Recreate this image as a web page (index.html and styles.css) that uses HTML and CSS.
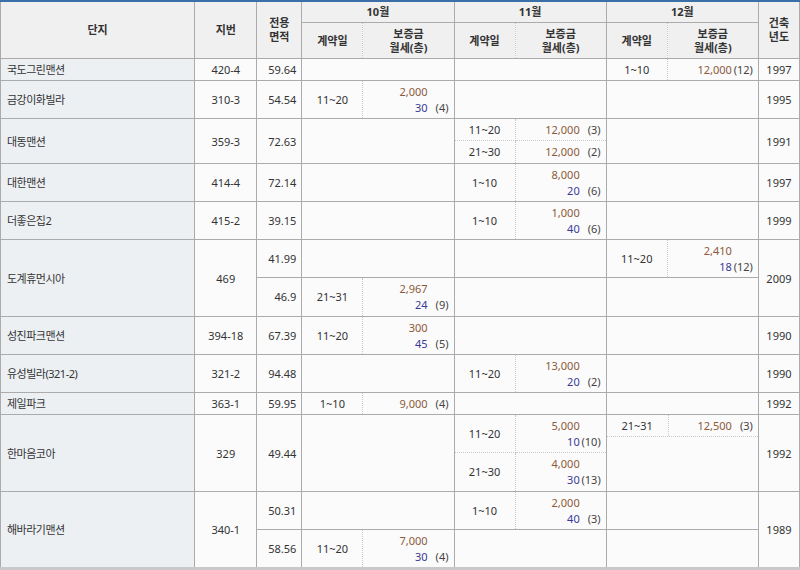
FILE: index.html
```html
<!DOCTYPE html>
<html lang="ko">
<head>
<meta charset="utf-8">
<title>실거래가</title>
<link rel="stylesheet" href="styles.css">
</head>
<body>
<table class="deals">
  <colgroup>
    <col class="c-name"><col class="c-jibun"><col class="c-area">
    <col class="c-date"><col class="c-amt">
    <col class="c-date"><col class="c-amt">
    <col class="c-date"><col class="c-amt">
    <col class="c-year">
  </colgroup>
  <thead>
    <tr>
      <th rowspan="2">단지</th>
      <th rowspan="2">지번</th>
      <th rowspan="2">전용<br>면적</th>
      <th colspan="2">10월</th>
      <th colspan="2">11월</th>
      <th colspan="2">12월</th>
      <th rowspan="2">건축<br>년도</th>
    </tr>
    <tr class="head2">
      <th class="hd">계약일</th><th class="ha">보증금<br>월세(층)</th>
      <th class="hd">계약일</th><th class="ha">보증금<br>월세(층)</th>
      <th class="hd">계약일</th><th class="ha">보증금<br>월세(층)</th>
    </tr>
  </thead>
  <tbody>
    <tr>
      <td class="name">국도그린맨션</td><td class="jibun">420-4</td><td class="area">59.64</td>
      <td colspan="2"></td>
      <td colspan="2"></td>
      <td class="date">1~10</td><td class="amt"><div><span class="dep">12,000</span><span class="fl">(12)</span></div></td>
      <td class="year">1997</td>
    </tr>
    <tr>
      <td class="name">금강이화빌라</td><td class="jibun">310-3</td><td class="area">54.54</td>
      <td class="date">11~20</td><td class="amt"><div><span class="dep">2,000</span><span class="fl"></span></div><div><span class="rent">30</span><span class="fl">(4)</span></div></td>
      <td colspan="2"></td>
      <td colspan="2"></td>
      <td class="year">1995</td>
    </tr>
    <tr>
      <td class="name" rowspan="2">대동맨션</td><td class="jibun" rowspan="2">359-3</td><td class="area" rowspan="2">72.63</td>
      <td colspan="2" rowspan="2"></td>
      <td class="date sub-top">11~20</td><td class="amt sub-top"><div><span class="dep">12,000</span><span class="fl">(3)</span></div></td>
      <td colspan="2" rowspan="2"></td>
      <td class="year" rowspan="2">1991</td>
    </tr>
    <tr class="plus1">
      <td class="date sub-bot">21~30</td><td class="amt sub-bot"><div><span class="dep">12,000</span><span class="fl">(2)</span></div></td>
    </tr>
    <tr>
      <td class="name">대한맨션</td><td class="jibun">414-4</td><td class="area">72.14</td>
      <td colspan="2"></td>
      <td class="date">1~10</td><td class="amt"><div><span class="dep">8,000</span><span class="fl"></span></div><div><span class="rent">20</span><span class="fl">(6)</span></div></td>
      <td colspan="2"></td>
      <td class="year">1997</td>
    </tr>
    <tr>
      <td class="name">더좋은집2</td><td class="jibun">415-2</td><td class="area">39.15</td>
      <td colspan="2"></td>
      <td class="date">1~10</td><td class="amt"><div><span class="dep">1,000</span><span class="fl"></span></div><div><span class="rent">40</span><span class="fl">(6)</span></div></td>
      <td colspan="2"></td>
      <td class="year">1999</td>
    </tr>
    <tr>
      <td class="name" rowspan="2">도계휴먼시아</td><td class="jibun" rowspan="2">469</td><td class="area">41.99</td>
      <td colspan="2"></td>
      <td colspan="2"></td>
      <td class="date">11~20</td><td class="amt"><div><span class="dep">2,410</span><span class="fl"></span></div><div><span class="rent">18</span><span class="fl">(12)</span></div></td>
      <td class="year" rowspan="2">2009</td>
    </tr>
    <tr class="plus1">
      <td class="area">46.9</td>
      <td class="date">21~31</td><td class="amt"><div><span class="dep">2,967</span><span class="fl"></span></div><div><span class="rent">24</span><span class="fl">(9)</span></div></td>
      <td colspan="2"></td>
      <td colspan="2"></td>
    </tr>
    <tr>
      <td class="name">성진파크맨션</td><td class="jibun">394-18</td><td class="area">67.39</td>
      <td class="date">11~20</td><td class="amt"><div><span class="dep">300</span><span class="fl"></span></div><div><span class="rent">45</span><span class="fl">(5)</span></div></td>
      <td colspan="2"></td>
      <td colspan="2"></td>
      <td class="year">1990</td>
    </tr>
    <tr>
      <td class="name">유성빌라(321-2)</td><td class="jibun">321-2</td><td class="area">94.48</td>
      <td colspan="2"></td>
      <td class="date">11~20</td><td class="amt"><div><span class="dep">13,000</span><span class="fl"></span></div><div><span class="rent">20</span><span class="fl">(2)</span></div></td>
      <td colspan="2"></td>
      <td class="year">1990</td>
    </tr>
    <tr>
      <td class="name">제일파크</td><td class="jibun">363-1</td><td class="area">59.95</td>
      <td class="date">1~10</td><td class="amt"><div><span class="dep">9,000</span><span class="fl">(4)</span></div></td>
      <td colspan="2"></td>
      <td colspan="2"></td>
      <td class="year">1992</td>
    </tr>
    <tr>
      <td class="name" rowspan="2">한마음코아</td><td class="jibun" rowspan="2">329</td><td class="area" rowspan="2">49.44</td>
      <td colspan="2" rowspan="2"></td>
      <td class="date sub-top">11~20</td><td class="amt sub-top"><div><span class="dep">5,000</span><span class="fl"></span></div><div><span class="rent">10</span><span class="fl">(10)</span></div></td>
      <td class="nest" colspan="2" rowspan="2">
        <div class="subrow">
          <div class="sub-date">21~31</div>
          <div class="sub-amt"><span class="dep">12,500</span><span class="fl">(3)</span></div>
        </div>
      </td>
      <td class="year" rowspan="2">1992</td>
    </tr>
    <tr class="plus1">
      <td class="date sub-bot">21~30</td><td class="amt sub-bot"><div><span class="dep">4,000</span><span class="fl"></span></div><div><span class="rent">30</span><span class="fl">(13)</span></div></td>
    </tr>
    <tr>
      <td class="name" rowspan="2">해바라기맨션</td><td class="jibun" rowspan="2">340-1</td><td class="area">50.31</td>
      <td colspan="2"></td>
      <td class="date">1~10</td><td class="amt"><div><span class="dep">2,000</span><span class="fl"></span></div><div><span class="rent">40</span><span class="fl">(3)</span></div></td>
      <td colspan="2"></td>
      <td class="year" rowspan="2">1989</td>
    </tr>
    <tr>
      <td class="area">58.56</td>
      <td class="date">11~20</td><td class="amt"><div><span class="dep">7,000</span><span class="fl"></span></div><div><span class="rent">30</span><span class="fl">(4)</span></div></td>
      <td colspan="2"></td>
      <td colspan="2"></td>
    </tr>
  </tbody>
</table>
</body>
</html>
```

FILE: styles.css
```css
html, body {
  margin: 0;
  padding: 0;
  background: #ffffff;
}

.deals {
  border-collapse: collapse;
  table-layout: fixed;
  width: 800px;
  font-family: "Noto Sans", "Noto Sans CJK KR", sans-serif;
  font-size: 11px;
  line-height: 16px;
  color: #333333;
  border-top: 2px solid #3a6fa8;
  border-bottom: 3px solid #c9c9c9;
}

.c-name { width: 194px; }
.c-jibun { width: 62px; }
.c-area { width: 45px; }
.c-date { width: 61px; }
.c-amt { width: 91px; }
.c-year { width: 41px; }

.deals th,
.deals td {
  border: 1px solid #ababab;
  vertical-align: middle;
  white-space: nowrap;
  overflow: hidden;
}

.deals th {
  background: #f0f0f0;
  font-weight: bold;
  line-height: 14px;
  padding: 3px 2px;
  color: #333333;
  text-align: center;
}

.deals .head2 th {
  padding: 4px 2px 3px;
}

.deals td {
  background: #fbfbfb;
  padding: 3px 5px 2px;
}

.deals .plus1 td {
  padding-bottom: 3px;
}

.deals th.hd { border-right: 1px dotted #c8c8c8; }
.deals th.ha { border-left: 1px dotted #c8c8c8; }

.deals td.name {
  background: #edf0f3;
  text-align: left;
  letter-spacing: -0.5px;
  padding-left: 6px;
}

.deals td.jibun,
.deals td.date,
.deals td.year {
  text-align: center;
}

.deals td.area {
  text-align: right;
}

.deals td.date {
  border-right: 1px dotted #c8c8c8;
}

.deals td.amt {
  text-align: right;
  border-left: 1px dotted #c8c8c8;
}

.deals td.sub-top { border-bottom: 1px dotted #c8c8c8; }
.deals td.sub-bot { border-top: 1px dotted #c8c8c8; }

.dep { color: #8c5a3a; }
.rent { color: #3a3a98; }

.fl {
  display: inline-block;
  width: 21px;
  text-align: right;
  color: #444444;
}

.deals td.nest {
  padding: 0;
  vertical-align: top;
}

.subrow {
  display: flex;
  border-bottom: 1px dotted #c8c8c8;
}

.sub-date {
  width: 61px;
  text-align: center;
  border-right: 1px dotted #c8c8c8;
  padding: 3px 0 2px;
}

.sub-amt {
  flex: 1;
  text-align: right;
  padding: 3px 5px 2px;
}
```
